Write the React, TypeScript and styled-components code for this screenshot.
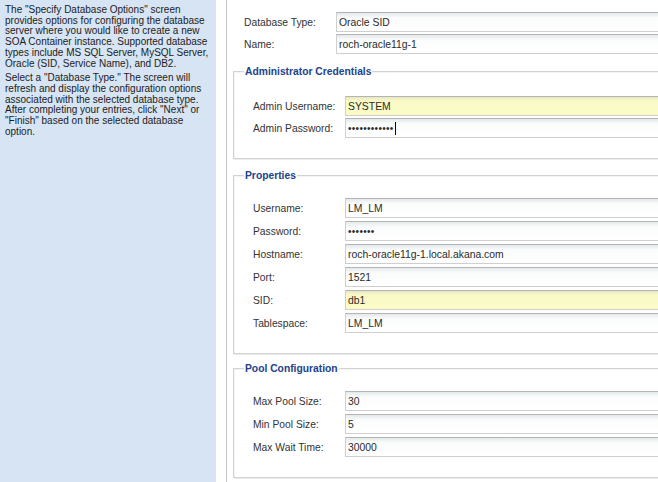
import React from 'react'
import styled, { createGlobalStyle } from 'styled-components'

const GlobalStyle = createGlobalStyle`
  html, body {
    margin: 0;
    padding: 0;
    background: #ffffff;
  }
  body {
    overflow: hidden;
  }
`

const Page = styled.div`
  display: flex;
  width: 658px;
  height: 482px;
  overflow: hidden;
  background: #ffffff;
`

const Sidebar = styled.div`
  flex: 0 0 216px;
  box-sizing: border-box;
  padding: 5px 3px 0 5px;
  background: #d6e4f3;
  color: #1c1c1c;
  font-family: "Liberation Sans", Arial, sans-serif;
  font-size: 10px;
  line-height: 10.7px;
`

const HelpText = styled.p`
  margin: 0 0 4px 0;
`

const Main = styled.div`
  flex: 0 0 520px;
  margin-left: 10px;
  border-left: 1px solid #c4c4c4;
  padding: 12px 0 0 6px;
  font-family: "Liberation Sans", Arial, sans-serif;
`

const Rows = styled.div<{ $gap: number; $indent: number }>`
  display: grid;
  grid-template-columns: 92px 1fr;
  row-gap: ${p => p.$gap}px;
  padding-left: ${p => p.$indent}px;
  align-items: center;
`

const Label = styled.div`
  font-size: 10.3px;
  color: #333333;
  white-space: nowrap;
`

const Field = styled.div<{ $yellow?: boolean }>`
  box-sizing: border-box;
  height: 20px;
  display: flex;
  align-items: center;
  padding: 0 2px;
  border: 1px solid #cfcfcf;
  border-top-color: #b4b4b4;
  background: ${p =>
    p.$yellow
      ? 'linear-gradient(to bottom, #e6e8c4 0, #fafac6 4px, #fbfbc8 100%)'
      : 'linear-gradient(to bottom, #e4e9eb 0, #fbfcfc 5px, #ffffff 100%)'};
  font-size: 10.4px;
  color: #2a2a2a;
  white-space: nowrap;
`

const Dots = styled.span`
  font-size: 10px;
  letter-spacing: 0.3px;
  color: #2a2a2a;
`

const Caret = styled.span`
  display: inline-block;
  width: 1px;
  height: 13px;
  margin-left: 1px;
  background: #000000;
`

const Group = styled.fieldset<{ $top: number; $padTop: number }>`
  margin: ${p => p.$top}px 0 0 0;
  padding: ${p => p.$padTop}px 0 20px 19px;
  border: 1px solid #d2d2d2;
  box-shadow: 1px 1px 0 #ececec, inset 1px 1px 0 #f4f4f4;
`

const Legend = styled.legend`
  margin-left: -9px;
  padding: 0 1px;
  font-size: 10.3px;
  line-height: 13px;
  font-weight: bold;
  color: #22438c;
`

type Row = { label: string; value: string; yellow?: boolean; password?: boolean; caret?: boolean }

const topRows: Row[] = [
  { label: 'Database Type:', value: 'Oracle SID' },
  { label: 'Name:', value: 'roch-oracle11g-1' },
]

const adminRows: Row[] = [
  { label: 'Admin Username:', value: 'SYSTEM', yellow: true },
  { label: 'Admin Password:', value: 'manager1234', password: true, caret: true },
]

const propRows: Row[] = [
  { label: 'Username:', value: 'LM_LM' },
  { label: 'Password:', value: 'lm_pass', password: true },
  { label: 'Hostname:', value: 'roch-oracle11g-1.local.akana.com' },
  { label: 'Port:', value: '1521' },
  { label: 'SID:', value: 'db1', yellow: true },
  { label: 'Tablespace:', value: 'LM_LM' },
]

const poolRows: Row[] = [
  { label: 'Max Pool Size:', value: '30' },
  { label: 'Min Pool Size:', value: '5' },
  { label: 'Max Wait Time:', value: '30000' },
]

function FormRows({ rows, gap, indent }: { rows: Row[]; gap: number; indent: number }) {
  return (
    <Rows $gap={gap} $indent={indent}>
      {rows.map(r => (
        <React.Fragment key={r.label}>
          <Label>{r.label}</Label>
          <Field $yellow={r.yellow}>
            {r.password ? <Dots>{'•'.repeat(r.value.length + (r.caret ? 1 : 0))}</Dots> : r.value}
            {r.caret && <Caret />}
          </Field>
        </React.Fragment>
      ))}
    </Rows>
  )
}

export default function App() {
  return (
    <Page>
      <GlobalStyle />
      <Sidebar>
        <HelpText>
          The "Specify Database Options" screen provides options for configuring the database
          server where you would like to create a new SOA Container instance. Supported database
          types include MS SQL Server, MySQL Server, Oracle (SID, Service Name), and DB2.
        </HelpText>
        <HelpText>
          Select a "Database Type." The screen will refresh and display the configuration options
          associated with the selected database type. After completing your entries, click "Next" or
          "Finish" based on the selected database option.
        </HelpText>
      </Sidebar>
      <Main>
        <FormRows rows={topRows} gap={2} indent={11} />
        <Group $top={11} $padTop={18}>
          <Legend>Administrator Credentials</Legend>
          <FormRows rows={adminRows} gap={2} indent={0} />
        </Group>
        <Group $top={10} $padTop={16}>
          <Legend>Properties</Legend>
          <FormRows rows={propRows} gap={3} indent={0} />
        </Group>
        <Group $top={8} $padTop={16}>
          <Legend>Pool Configuration</Legend>
          <FormRows rows={poolRows} gap={3} indent={0} />
        </Group>
      </Main>
    </Page>
  )
}
